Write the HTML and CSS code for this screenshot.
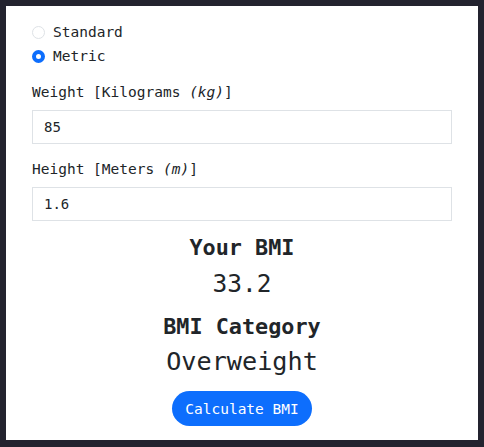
FILE: index.html
```html
<!DOCTYPE html>
<html>
<head>
<meta charset="utf-8">
<link rel="stylesheet" href="styles.css">
</head>
<body>
<div class="card">
  <div class="radios">
    <label class="radio-row"><span class="radio"></span><span>Standard</span></label>
    <label class="radio-row"><span class="radio checked"></span><span>Metric</span></label>
  </div>
  <div class="field-label first">Weight [Kilograms <em>(kg)</em>]</div>
  <div class="input">85</div>
  <div class="field-label">Height [Meters <em>(m)</em>]</div>
  <div class="input">1.6</div>
  <div class="results">
    <div class="res-title">Your BMI</div>
    <div class="res-value">33.2</div>
    <div class="res-title second">BMI Category</div>
    <div class="res-value cat">Overweight</div>
    <button class="btn">Calculate BMI</button>
  </div>
</div>
</body>
</html>
```
FILE: styles.css
```css
html, body {
  margin: 0;
  padding: 0;
}
body {
  background: #23232f;
  padding: 6px;
  font-family: "DejaVu Sans Mono", "Liberation Mono", monospace;
  color: #212529;
}
.card {
  background: #ffffff;
  width: 472px;
  height: 434px;
  box-sizing: border-box;
  padding: 14px 26px 0 26px;
}
.radios {
  display: flex;
  flex-direction: column;
}
.radio-row {
  display: flex;
  align-items: center;
  height: 24px;
  font-size: 14.5px;
  gap: 8px;
}
.radio {
  width: 13px;
  height: 13px;
  border-radius: 50%;
  border: 1px solid #dee2e6;
  box-sizing: border-box;
  background: #fff;
}
.radio.checked {
  border: 4px solid #0d6efd;
  background: #fff;
}
.field-label {
  font-size: 14.5px;
  line-height: 20px;
  margin-top: 15px;
  margin-bottom: 8px;
}
.field-label.first {
  margin-top: 14px;
}
.field-label em {
  font-style: italic;
}
.input {
  height: 34px;
  box-sizing: border-box;
  border: 1px solid #dee2e6;
  padding: 0 11px;
  display: flex;
  align-items: center;
  font-size: 14px;
}
.results {
  display: flex;
  flex-direction: column;
  align-items: center;
}
.res-title {
  font-weight: bold;
  font-size: 21.8px;
  line-height: 28px;
  margin-top: 13px;
}
.res-title.second {
  margin-top: 14px;
}
.res-value {
  font-size: 24.5px;
  line-height: 30px;
  margin-top: 7px;
}
.res-value.cat {
  font-size: 25.2px;
  line-height: 32px;
  margin-top: 5px;
}
.btn {
  margin-top: 13px;
  height: 35px;
  padding: 0 13px;
  border: none;
  border-radius: 18px;
  background: #0d6efd;
  color: #fff;
  font-family: inherit;
  font-size: 14.5px;
}
```
